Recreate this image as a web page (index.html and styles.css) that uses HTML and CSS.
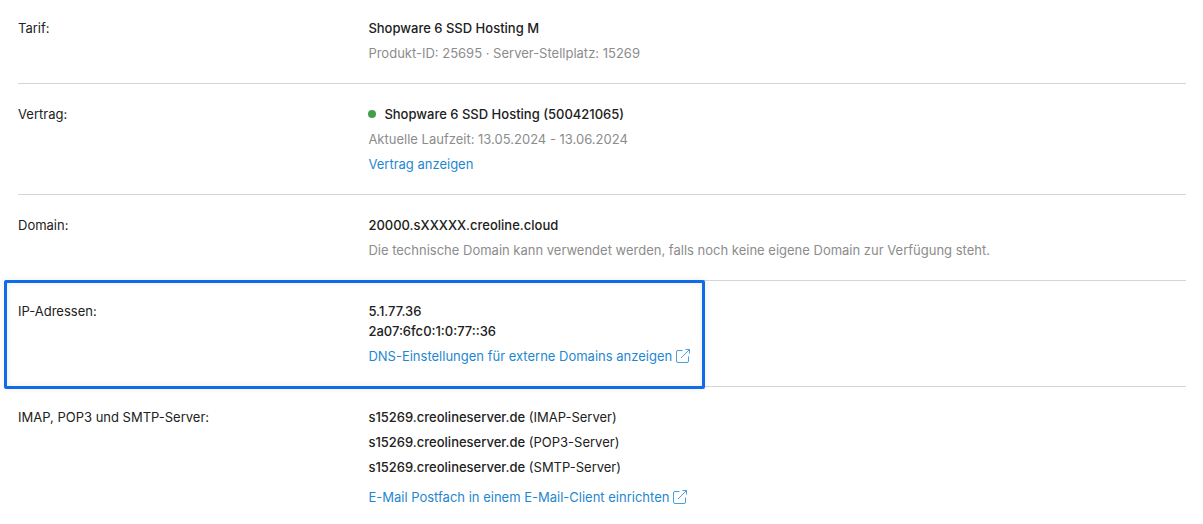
FILE: index.html
```
<!DOCTYPE html>
<html lang="de">
<head>
    <meta charset="UTF-8">
    <title>Server-Details</title>
    <link rel="stylesheet" href="styles.css">
</head>
<body>
    <dl class="details">
        <!-- Tarif -->
        <div class="row">
            <dt>Tarif:</dt>
            <dd>
                <strong>Shopware 6 SSD Hosting M</strong>
                <span class="muted">Produkt-ID: 25695 · Server-Stellplatz: 15269</span>
            </dd>
        </div>
        <!-- Vertrag -->
        <div class="row">
            <dt>Vertrag:</dt>
            <dd>
                <strong class="status">Shopware 6 SSD Hosting (500421065)</strong>
                <span class="muted">Aktuelle Laufzeit: 13.05.2024 - 13.06.2024</span>
                <a href="#vertrag">Vertrag anzeigen</a>
            </dd>
        </div>
        <!-- Domain -->
        <div class="row">
            <dt>Domain:</dt>
            <dd>
                <strong>20000.sXXXXX.creoline.cloud</strong>
                <span class="muted">Die technische Domain kann verwendet werden, falls noch keine eigene Domain zur Verfügung steht.</span>
            </dd>
        </div>
        <!-- IP-Adressen -->
        <div class="row highlighted">
            <dt>IP-Adressen:</dt>
            <dd>
                <strong>5.1.77.36<br>2a07:6fc0:1:0:77::36</strong>
                <a href="#dns">DNS-Einstellungen für externe Domains anzeigen
                    <svg class="icon" viewBox="0 0 14 14" aria-hidden="true">
                        <path d="M6.5 1.5H2Q.5 1.5 .5 3V12Q.5 13.5 2 13.5H11Q12.5 13.5 12.5 12V7.5M5 9L13.3 .7M9.5 .5H13.5V4.5"/>
                    </svg>
                </a>
            </dd>
        </div>
        <!-- Mailserver -->
        <div class="row">
            <dt>IMAP, POP3 und SMTP-Server:</dt>
            <dd>
                <span><strong>s15269.creolineserver.de</strong> (IMAP-Server)</span>
                <span><strong>s15269.creolineserver.de</strong> (POP3-Server)</span>
                <span><strong>s15269.creolineserver.de</strong> (SMTP-Server)</span>
                <a class="mail-link" href="#mail">E-Mail Postfach in einem E-Mail-Client einrichten
                    <svg class="icon" viewBox="0 0 14 14" aria-hidden="true">
                        <path d="M6.5 1.5H2Q.5 1.5 .5 3V12Q.5 13.5 2 13.5H11Q12.5 13.5 12.5 12V7.5M5 9L13.3 .7M9.5 .5H13.5V4.5"/>
                    </svg>
                </a>
            </dd>
        </div>
    </dl>
</body>
</html>
```
FILE: styles.css
```
body {
    margin: 0;
    padding: 0 17px 0 18px;
    font-family: Inter, 'Liberation Sans', sans-serif;
    font-size: 13px;
    line-height: 20px;
    color: #212121;
    background-color: #fff;
}
.details {
    margin: 0;
}
/* One label with its values */
.row {
    position: relative;
    display: grid;
    grid-template-columns: 30% 1fr;
    padding: 20px 0;
    border-bottom: 1px solid #d5d5d5;
}
.row:first-child {
    padding-top: 18px;
}
.row:last-child {
    padding-bottom: 16px;
    border-bottom: none;
}
dd {
    display: flex;
    flex-direction: column;
    align-items: flex-start;
    gap: 5px;
    margin: 0;
}
strong {
    font-weight: 500;
}
.muted {
    color: #8c8c8c;
}
a {
    color: #1f87d0;
    text-decoration: none;
}
a:hover {
    text-decoration: underline;
}
.mail-link {
    margin-top: 5px;
}
/* Green dot for an active contract */
.status {
    display: flex;
    align-items: center;
    gap: 8px;
}
.status::before {
    content: "";
    width: 8px;
    height: 8px;
    border-radius: 50%;
    background-color: #43a047;
}
/* External link icon */
.icon {
    width: 14px;
    height: 14px;
    vertical-align: -2px;
    fill: none;
    stroke: currentColor;
    stroke-width: 0.8;
}
/* Blue frame over the row */
.highlighted::after {
    content: "";
    position: absolute;
    top: -1px;
    bottom: -3px;
    left: -14px;
    width: 60%;
    box-sizing: border-box;
    border: 3px solid #0f6bea;
    border-radius: 2px;
    box-shadow: 0 0 6px rgba(0, 0, 0, 0.08), inset 0 0 6px rgba(0, 0, 0, 0.08);
    pointer-events: none;
}
```
